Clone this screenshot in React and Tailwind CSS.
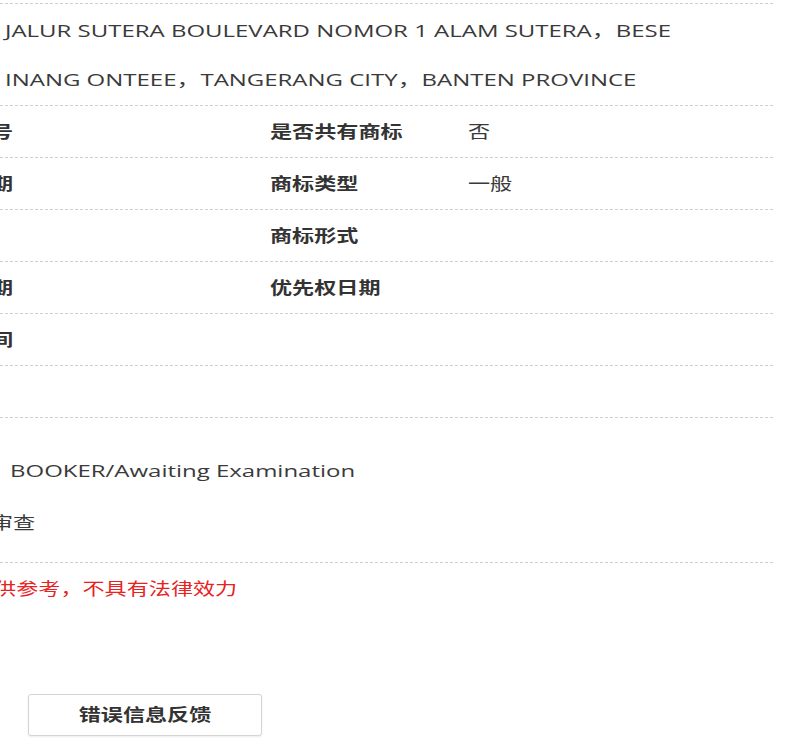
import React from "react";

const font = { fontFamily: '"Open Sans", "Noto Sans CJK SC", sans-serif' };

const rows = [
  { label: "申请号", label2: "是否共有商标", value2: "否" },
  { label: "申请日期", label2: "商标类型", value2: "一般" },
  { label: "", label2: "商标形式", value2: "" },
  { label: "初审公告日期", label2: "优先权日期", value2: "" },
];

// the source page is stretched sideways, so text gets a horizontal scale
const Latin = ({ children, className = "" }) => (
  <span className={`inline-block origin-left scale-x-[1.41] whitespace-nowrap ${className}`}>{children}</span>
);
const Han = ({ children, className = "" }) => (
  <span className={`inline-block origin-left scale-x-[1.3] whitespace-nowrap ${className}`}>{children}</span>
);

const Cut = ({ text }) => (
  <div className="flex w-[13px] shrink-0 justify-end overflow-hidden whitespace-nowrap text-[17px] font-bold text-[#333]">
    <span className="inline-block origin-right scale-x-[1.3]">{text}</span>
  </div>
);

export default function App() {
  return (
    <div className="min-h-[755px] w-[800px] overflow-hidden bg-white pt-[3px] text-[#333]" style={font}>
      <div className="w-[773px] border-t border-dashed border-[#cfcfcf]">
        <div className="flex h-[102px] items-center border-b border-dashed border-[#cfcfcf]">
          <div className="pl-[5px] text-[17px] leading-[49px] text-[#3a3a3a]">
            <div>
              <Latin>JALUR SUTERA BOULEVARD NOMOR 1 ALAM SUTERA，BESE</Latin>
            </div>
            <div>
              <Latin>INANG ONTEEE，TANGERANG CITY，BANTEN PROVINCE</Latin>
            </div>
          </div>
        </div>

        {rows.map((r) => (
          <div key={r.label2} className="flex h-[52px] items-center border-b border-dashed border-[#cfcfcf]">
            <Cut text={r.label} />
            <div className="w-[257px] shrink-0" />
            <div className="w-[198px] shrink-0 text-[17px] font-bold text-[#333]">
              <Han>{r.label2}</Han>
            </div>
            <div className="text-[17px] text-[#3a3a3a]">
              <Han>{r.value2}</Han>
            </div>
          </div>
        ))}

        <div className="flex h-[52px] items-center border-b border-dashed border-[#cfcfcf]">
          <Cut text="期间" />
        </div>
        <div className="h-[52px] border-b border-dashed border-[#cfcfcf]" />

        <div className="border-b border-dashed border-[#cfcfcf] pb-[13px] pt-[27px]">
          <div className="flex h-[52px] items-center">
            <div className="pl-[10px] text-[17px] text-[#3a3a3a]">
              <Latin>BOOKER/Awaiting Examination</Latin>
            </div>
          </div>
          <div className="flex h-[52px] items-center overflow-hidden">
            <div className="ml-[-9px] text-[17px] text-[#3a3a3a]">
              <Han>审查</Han>
            </div>
          </div>
        </div>

        <div className="flex h-[52px] items-center overflow-hidden">
          <div className="ml-[-28px] text-[17px] text-[#e8221f]">
            <Han>仅供参考，不具有法律效力</Han>
          </div>
        </div>
      </div>

      <div className="mt-[79px] pl-[28px]">
        <button className="flex h-[42px] w-[234px] items-center justify-center rounded-[3px] border border-[#d4d4d4] bg-white text-[17px] font-bold text-[#333] shadow-[0_1px_2px_rgba(0,0,0,0.08)]">
          <span className="inline-block scale-x-[1.3]">错误信息反馈</span>
        </button>
      </div>
    </div>
  );
}
